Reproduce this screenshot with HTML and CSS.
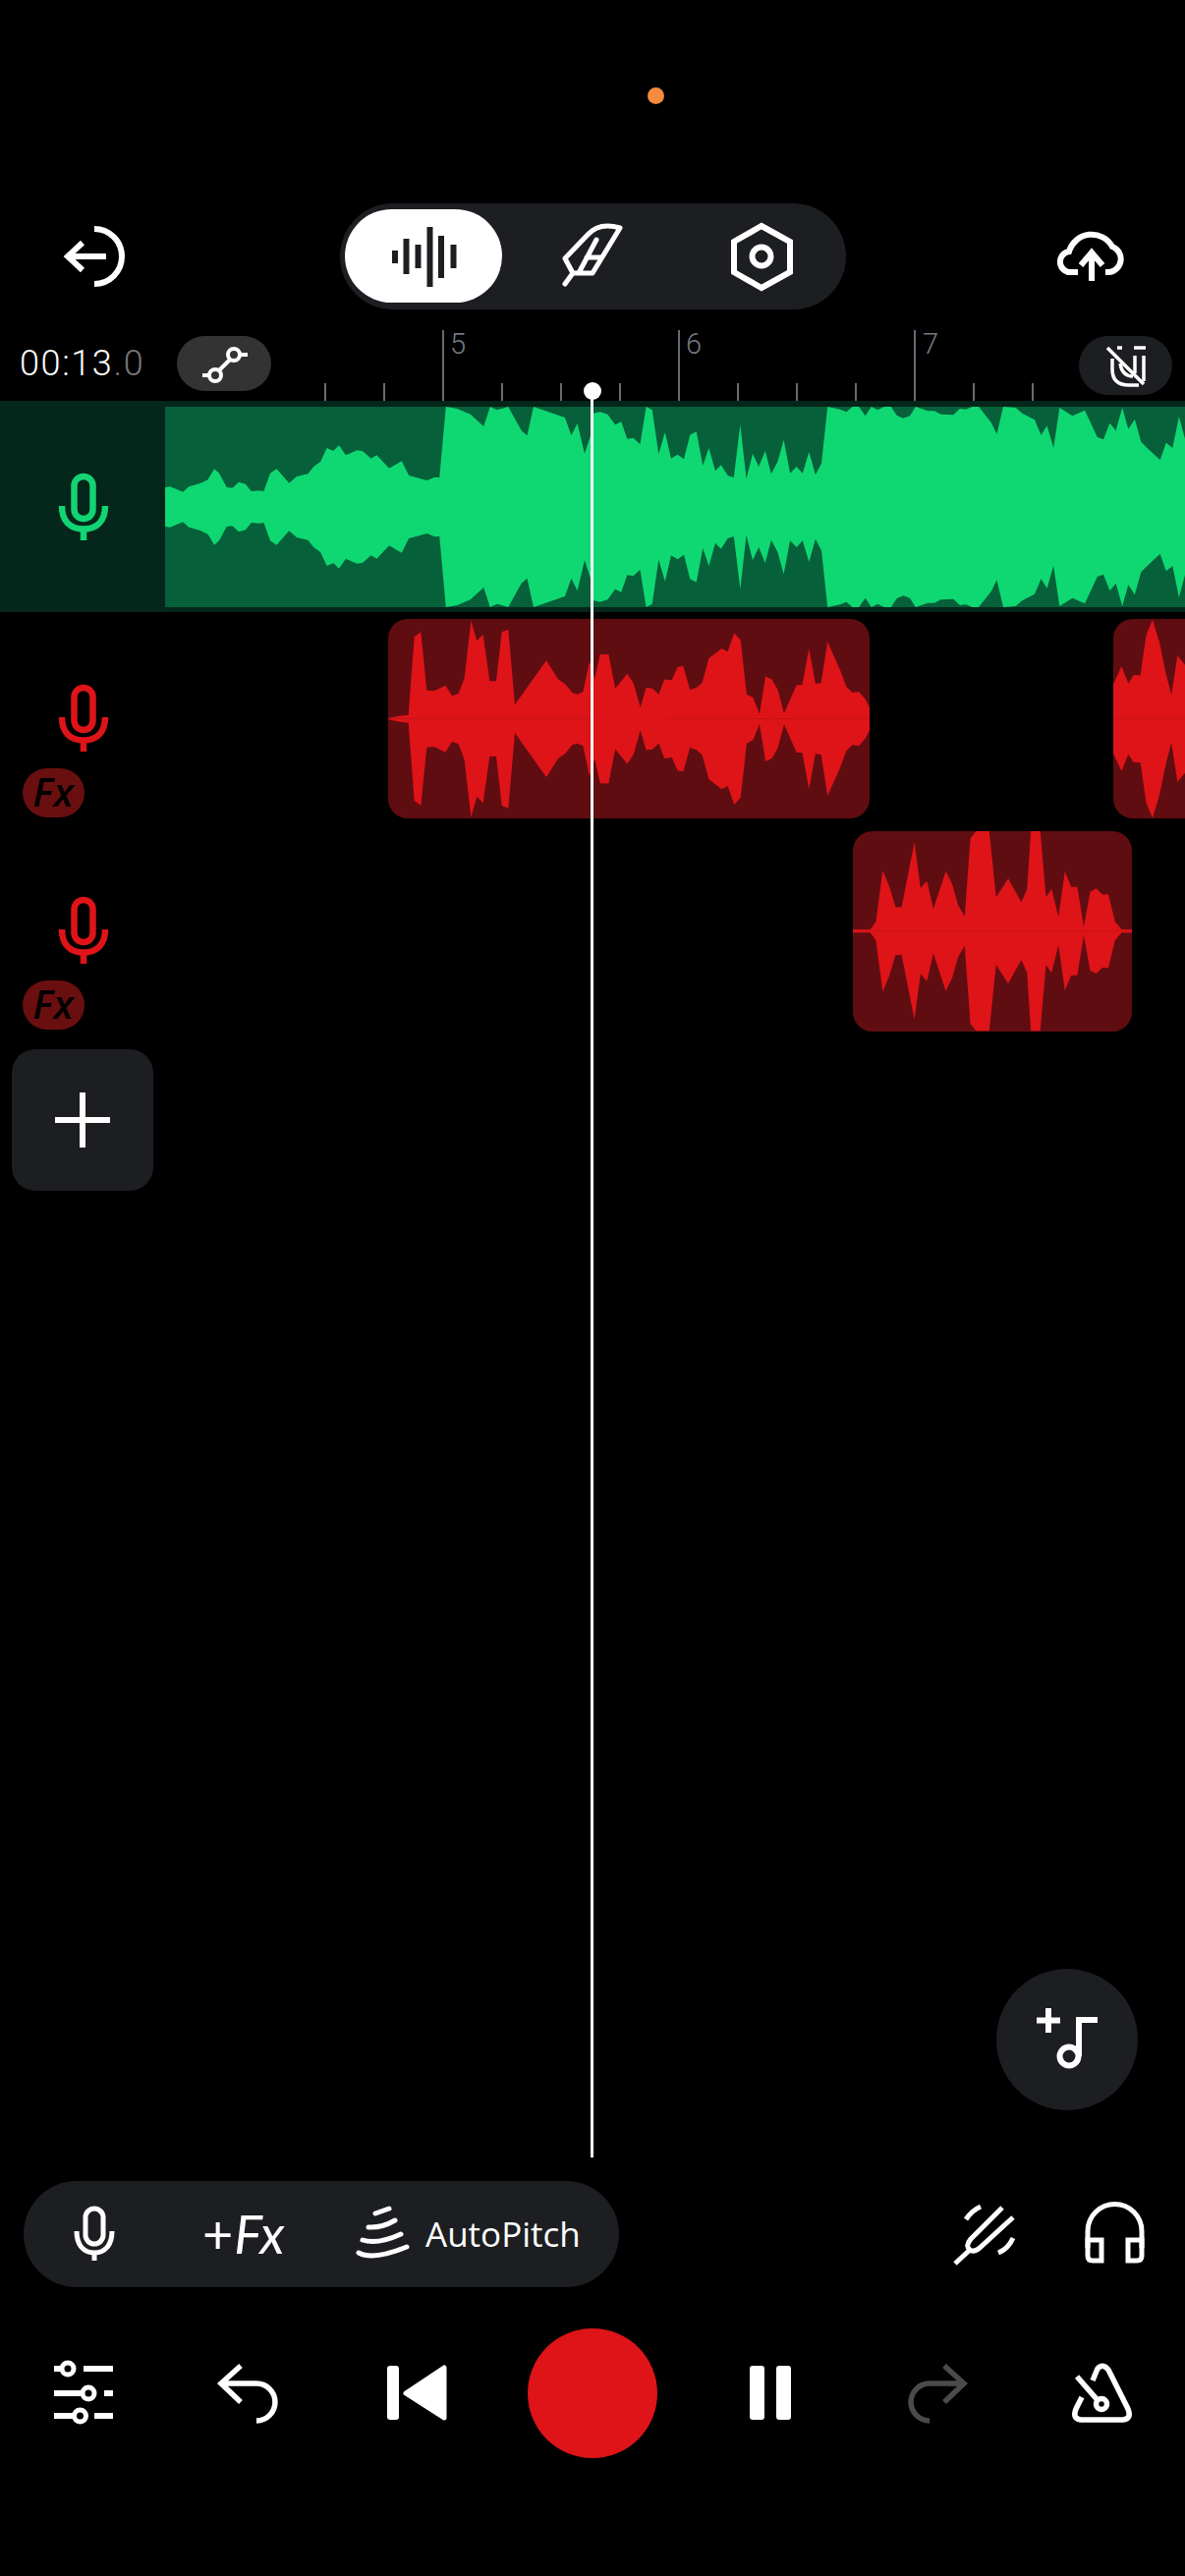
FILE: index.html
```html
<!DOCTYPE html>
<html lang="en">
<head>
<meta charset="utf-8">
<title>Studio</title>
<link rel="stylesheet" href="styles.css">
</head>
<body>
<div class="page">
  <div class="status"><span class="status-dot"></span></div>

  <div class="topbar">
    <svg class="ico80 stroke s6" viewBox="56 220 80 80"><path d="M96 232A28 28 0 0 1 96 288"/><path d="M108 260H70M84 246L69 260L84 274"/></svg>
    <div class="segments">
      <div class="seg seg-on">
        <svg class="ico80" viewBox="391 220 80 80"><g class="bars"><rect x="399" y="254" width="6" height="13"/><rect x="410.500" y="242" width="6" height="36"/><rect x="422.500" y="248" width="6" height="24"/><rect x="434.500" y="230" width="6" height="61"/><rect x="446" y="239" width="6" height="43"/><rect x="458.500" y="248" width="6" height="24"/></g></svg>
      </div>
      <div class="seg">
        <svg class="ico80 stroke s5 round" viewBox="563 220 80 80"><path d="M631 231C618 227 606 229 598 238L575 262L583 277H603Z"/><path d="M583 277L575 288M607 243L590 275M597 261H612"/></svg>
      </div>
      <div class="seg">
        <svg class="ico80 stroke s6" viewBox="735 220 80 80"><path d="M775 229L804 245V276L775 292L747 276V245Z"/><circle cx="775" cy="260" r="9.500"/></svg>
      </div>
    </div>
    <svg class="ico80 stroke s6" viewBox="1070 220 80 80"><path d="M1096 276H1090A10.500 10.500 0 0 1 1087 255A24 24 0 0 1 1131 250A13.500 13.500 0 0 1 1128 276H1124"/><path d="M1110 285V256M1099 269L1110 256L1121 269"/></svg>
  </div>

  <div class="ruler">
    <div class="time">00:13<span class="time-dim">.0</span></div>
    <div class="chip chip-curve">
      <svg class="ico56 stroke s4" viewBox="200 342 56 56"><circle cx="219" cy="382" r="6"/><circle cx="238" cy="361" r="6"/><path d="M223 377L234 366M206 382H213M244 361H252"/></svg>
    </div>
    <svg class="ruler-scale" viewBox="276 315 822 93">
      <g class="tick-major"><path d="M451 336V408M691 336V408M931 336V408"/></g>
      <g class="tick-minor"><path d="M331 390V408M391 390V408M511 390V408M571 390V408M631 390V408M751 390V408M811 390V408M871 390V408M991 390V408M1051 390V408"/></g>
      <text class="tick-label" x="458" y="360">5</text>
      <text class="tick-label" x="698" y="360">6</text>
      <text class="tick-label" x="939" y="360">7</text>
    </svg>
    <div class="chip chip-magnet">
      <svg class="ico60 stroke s3" viewBox="1115 342 60 60"><path d="M1126 354L1163 391"/><path d="M1131 365V376Q1131 392 1148 392H1158"/><path d="M1139 370Q1141 383 1152 383"/><path d="M1154 362V380M1163 362V388M1136 354H1141M1153 354H1165"/></svg>
    </div>
  </div>

  <section class="track-green">
    <div class="track-head">
      <svg class="mic mic-green" viewBox="0 0 80 80"><rect x="30.500" y="9" width="19" height="43" rx="9.500"/><path d="M18 39C18 55 27 62.500 40 62.500S62 55 62 39M40 64V74"/></svg>
    </div>
    <div class="lane-green">
      <svg class="lane-svg" viewBox="168 414 1038 204">
        <g class="wave-green" transform="translate(0 400) scale(.38457 .33333)">
          <path id="g1" d="M437 348V288L450 286L484 302L500 286L530 276L550 265L567 232L580 245L600 288L615 290L632 272L650 278L665 300L685 298L698 300L715 245L732 232L765 275L785 255L815 247L830 225L848 210L865 168L882 177L897 160L915 190L945 175L960 178L982 200L997 190L1030 230L1063 208L1082 252L1130 267L1150 257L1163 258L1180 42L1210 48L1245 65L1280 102L1297 42L1315 52L1345 42L1380 115L1395 130L1412 42L1495 75L1512 130L1528 92L1547 185L1563 130L1568 90V348Z"/>
          <use href="#g1" transform="matrix(1 0 0 -1 0 696)"/>
        </g>
        <g class="wave-green" transform="translate(603 400) scale(.38457 .33333)">
          <path id="g2" d="M0 348V70L3 62L20 58L40 65L60 97L76 88L92 140L108 137L126 157L142 42L158 52L175 187L192 120L208 200L225 188L242 202L258 128L275 118L292 222L308 168L325 238L340 220L358 252L374 258L391 97L407 262L424 185L440 225L457 177L473 247L490 210L506 143L523 245L540 225L556 245L573 180L590 250L606 215L622 42L655 50L672 58L688 42L705 42L722 70L738 42L755 52L772 42L790 42L805 68L822 77L840 70L855 42L888 55L905 55L922 65L955 67L972 48L988 50L1005 42L1022 42L1055 90L1070 125L1087 42L1120 45L1137 62L1170 82L1187 128L1203 100L1220 168L1236 45L1270 70L1303 53L1336 135L1352 142L1369 92L1385 115L1402 45L1418 110L1435 80L1452 150L1470 170L1502 205L1518 152L1535 168L1552 72L1568 140V348Z"/>
          <use href="#g2" transform="matrix(1 0 0 -1 0 696)"/>
        </g>
      </svg>
    </div>
  </section>

  <section class="track-red track-red-first">
    <div class="track-head-red">
      <svg class="mic mic-red" viewBox="0 0 80 80"><rect x="30.500" y="9" width="19" height="43" rx="9.500"/><path d="M18 39C18 55 27 62.500 40 62.500S62 55 62 39M40 64V74"/></svg>
      <div class="fx-badge">Fx</div>
    </div>
    <div class="lane-red">
      <div class="clip clip-a">
        <svg class="clip-svg" viewBox="395 630 490 203">
          <g class="wave-red" transform="translate(380 620) scale(.33333 .33333)">
            <path id="r1" d="M45 335V333L80 326L107 323L125 85L145 70L163 248L185 250L220 233L240 265L260 258L278 210L298 35L316 97L335 78L355 220L375 220L392 70L412 62L432 292L528 157L565 215L585 228L607 255L622 260L640 253L660 160L680 225L695 138L718 138L738 243L775 198L795 232L815 300L833 240L855 245L873 262L895 215L900 215V335Z"/>
            <use href="#r1" transform="matrix(1 0 0 -1 0 670)"/>
          </g>
          <g class="wave-red" transform="translate(603 610) scale(.38457 .33333)">
            <path id="r2" d="M0 365V262L3 258L20 168L42 168L60 275L92 228L108 255L127 335L142 270L158 272L175 292L190 245L210 247L225 207L240 204L258 277L275 270L290 255L308 180L342 150L358 160L375 103L392 125L408 290L425 300L442 350L458 235L475 245L490 275L507 348L540 262L555 262L573 150L590 258L605 256L622 130L655 215L672 268L688 285L705 283L722 305L735 335V365Z"/>
            <use href="#r2" transform="matrix(1 0 0 -1 0 730)"/>
          </g>
        </svg>
      </div>
      <div class="clip clip-c">
        <svg class="clip-svg" viewBox="1133 630 73 203">
          <g class="wave-red" transform="translate(603 610) scale(.38457 .33333)">
            <path id="r3" d="M1378 365V260L1400 205L1418 257L1432 232L1450 232L1465 110L1482 62L1500 130L1517 225L1532 292L1548 172L1568 200V365Z"/>
            <use href="#r3" transform="matrix(1 0 0 -1 0 730)"/>
          </g>
        </svg>
      </div>
    </div>
  </section>

  <section class="track-red">
    <div class="track-head-red">
      <svg class="mic mic-red" viewBox="0 0 80 80"><rect x="30.500" y="9" width="19" height="43" rx="9.500"/><path d="M18 39C18 55 27 62.500 40 62.500S62 55 62 39M40 64V74"/></svg>
      <div class="fx-badge">Fx</div>
    </div>
    <div class="lane-red">
      <div class="clip clip-b">
        <svg class="clip-svg" viewBox="868 846 284 204">
          <g class="wave-red" transform="translate(603 610) scale(.38457 .33333)">
            <path id="r4" d="M688 1013V1008L735 1008L750 985L768 828L785 875L802 940L818 940L852 742L868 882L885 860L902 945L935 830L952 870L968 935L985 968L1000 730L1015 708L1050 708L1068 910L1100 853L1135 925L1150 885L1160 708L1185 708L1200 910L1215 885L1233 970L1250 832L1267 878L1283 878L1300 1000L1317 893L1333 883L1350 902L1365 900L1383 985L1400 1008L1427 1008V1013Z"/>
            <use href="#r4" transform="matrix(1 0 0 -1 0 2026)"/>
          </g>
        </svg>
      </div>
    </div>
  </section>

  <button class="add-track"><svg class="ico80 stroke s6" viewBox="44 1099 80 80"><path d="M84 1111V1167M56 1139H112"/></svg></button>

  <div class="fab-row">
    <button class="fab"><svg class="ico80 stroke s6" viewBox="1046 2036 80 80"><path d="M1067 2044V2069M1055 2056.500H1079"/><circle cx="1088" cy="2093" r="9.500"/><path d="M1098 2093V2056H1117"/></svg></button>
  </div>

  <div class="tools">
    <div class="tool-pill">
      <svg class="ico80 stroke s5" viewBox="56 2234 80 80"><rect x="87" y="2248" width="18" height="36" rx="9"/><path d="M78 2271C78 2285 85 2293 96 2293S114 2285 114 2271M96 2293V2301"/></svg>
      <div class="plus-fx">+<span class="plus-fx-name">Fx</span></div>
      <svg class="ico-pitch" viewBox="360 2244 60 60"><path d="M382 2253L396 2248"/><path d="M375 2267Q388 2268 402 2260"/><path d="M369 2280Q384 2285 408 2274"/><path d="M365 2293Q380 2301 414 2287"/></svg>
      <div class="pitch-label">AutoPitch</div>
    </div>
    <svg class="ico80 stroke s5 fork" viewBox="961 2234 80 80"><path d="M1020 2247L988 2279Q982 2286 987 2290Q991 2293 997 2288L1031 2257M972 2304L986 2291"/><path d="M983 2259Q989 2250 998 2246M1016 2293Q1026 2289 1031 2278"/></svg>
    <svg class="ico80 stroke s5 phones" viewBox="1094 2234 80 80"><path d="M1107 2288V2271A27.500 27.500 0 0 1 1162 2271V2288"/><path d="M1107 2280H1121V2301H1112Q1107 2301 1107 2296Z"/><path d="M1162 2280H1148V2301H1157Q1162 2301 1162 2296Z"/></svg>
  </div>

  <div class="transport">
    <svg class="ico80 stroke s6" viewBox="45 2396 80 80"><path d="M55 2411H62M85 2411H115M55 2436H83M106 2436H115M55 2459H74M96 2459H115"/><g class="s5"><circle cx="69" cy="2411" r="6"/><circle cx="90" cy="2436" r="6"/><circle cx="81.500" cy="2459" r="6"/></g></svg>
    <svg class="ico80 stroke s55" viewBox="213 2396 80 80"><path d="M245 2408L225 2426L245 2445M225 2426H261A19 19 0 0 1 261 2464"/></svg>
    <svg class="ico80" viewBox="384 2396 80 80"><rect class="fill-white" x="394" y="2408" width="12" height="55" rx="3"/><path class="fill-white round-join" d="M452 2410V2461L413 2436Z"/></svg>
    <div class="record"></div>
    <svg class="ico80" viewBox="744 2396 80 80"><rect class="fill-white" x="763" y="2408" width="15" height="55" rx="3"/><rect class="fill-white" x="790" y="2408" width="15" height="55" rx="3"/></svg>
    <svg class="ico80 stroke stroke-dim s55" viewBox="915 2396 80 80"><path d="M961 2408L981 2426L961 2445M981 2426H946A19 19 0 0 0 946 2464"/></svg>
    <svg class="ico80 stroke s55" viewBox="1082 2396 80 80"><path d="M1102 2440L1096 2452Q1092 2462 1101 2463H1144Q1153 2462 1149 2452L1129 2412Q1123 2405 1118 2411L1113 2423"/><path d="M1097 2419L1118 2443"/><circle cx="1122" cy="2447" r="5.500"/></svg>
  </div>

  <div class="playhead"><span class="playhead-dot"></span></div>
</div>
</body>
</html>
```
FILE: styles.css
```css
* { box-sizing: border-box; }
html, body { margin: 0; padding: 0; background: #000; }
.page { position: relative; width: 1206px; height: 2622px; background: #000; overflow: hidden; display: flex; flex-direction: column; font-family: "Lato", "Liberation Sans", sans-serif; color: #fff; }

.status { height: 207px; padding: 89px 0 0 659px; }
.status-dot { display: block; width: 17px; height: 17px; border-radius: 50%; background: #f58b3f; }

svg { display: block; flex: none; }
.ico80 { width: 80px; height: 80px; }
.ico56 { width: 56px; height: 56px; }
.ico60 { width: 60px; height: 60px; }
.stroke { fill: none; stroke: #fff; stroke-linejoin: miter; }
.round { stroke-linejoin: round; stroke-linecap: round; }
.s3 { stroke-width: 3.5; }
.s4 { stroke-width: 4; }
.s5 { stroke-width: 5; }
.s55 { stroke-width: 5.5; }
.s6 { stroke-width: 6; }
.stroke-dim { stroke: #4b4b4b; }
.fill-white { fill: #fff; }
.round-join { stroke: #fff; stroke-width: 5; stroke-linejoin: round; }

.topbar { height: 108px; display: flex; align-items: center; padding-left: 56px; gap: 210px; }
.segments { width: 515px; height: 108px; border-radius: 54px; background: #1c1e21; padding: 6px 6px 7px 5px; display: flex; }
.seg { display: flex; align-items: center; justify-content: center; width: 160px; }
.seg:nth-child(2) { width: 184px; }
.seg-on { background: #fff; border-radius: 48px; }
.bars rect { fill: #1c1e21; }

.ruler { height: 93px; display: flex; align-items: flex-start; padding-left: 20px; }
.time { width: 160px; height: 56px; margin-top: 27px; font: 300 36px/56px "Roboto", sans-serif; letter-spacing: 1.6px; white-space: nowrap; }
.time-dim { color: #777; }
.chip { display: flex; align-items: center; justify-content: center; margin-top: 27px; width: 96px; height: 56px; border-radius: 28px; background: #333; flex: none; }
.chip-magnet { width: 95px; height: 60px; border-radius: 30px; background: #1c1e21; }
.ruler-scale { width: 822px; height: 93px; }
.tick-major path, .tick-minor path { stroke: #666c74; stroke-width: 2; fill: none; }
.tick-label { font: 300 29px "Roboto", sans-serif; fill: #737a84; }

.track-green { height: 215px; display: flex; background: #05261a; padding: 6px 0 5px; }
.track-head { width: 168px; display: flex; align-items: center; padding-left: 45px; }
.lane-green { flex: 1; background: #066039; }
.lane-svg { width: 1038px; height: 204px; }
.wave-green { fill: #0fd873; }
.wave-red { fill: #de1419; }

.mic { width: 80px; height: 80px; fill: none; stroke-width: 6.5; }
.mic-green { stroke: #12d473; }
.mic-red { stroke: #de1419; }

.track-red { height: 204px; display: flex; margin-top: 13px; }
.track-red-first { height: 203px; margin-top: 7px; }
.track-head-red { width: 168px; padding: 61px 0 0 45px; flex: none; }
.fx-badge { width: 63px; height: 50px; margin: 11px 0 0 -22px; border-radius: 25px; background: #6a0f10; color: #000; font: italic 600 40px/48px "Open Sans", sans-serif; letter-spacing: 1px; text-align: center; }
.lane-red { position: relative; flex: 1; }
.clip { position: absolute; top: 0; height: 100%; background: #600d11; overflow: hidden; }
.clip-a { left: 227px; width: 490px; border-radius: 20px; }
.clip-c { left: 965px; width: 73px; border-radius: 20px 0 0 20px; }
.clip-b { left: 700px; width: 284px; border-radius: 20px; }
.clip-svg { width: 100%; height: 100%; }

.add-track { width: 144px; height: 144px; margin: 18px 0 0 12px; padding: 0; border: 0; border-radius: 24px; background: #1c1e21; display: flex; align-items: center; justify-content: center; }

.fab-row { display: flex; justify-content: flex-end; padding-right: 48px; margin-top: 792px; }
.fab { width: 144px; height: 144px; padding: 0; border: 0; border-radius: 50%; background: #1c1e21; display: flex; align-items: center; justify-content: center; }

.tools { display: flex; align-items: center; height: 108px; margin-top: 72px; padding-left: 24px; }
.tool-pill { width: 606px; height: 108px; border-radius: 54px; background: #1c1e21; padding-left: 32px; display: flex; align-items: center; flex: none; }
.plus-fx { width: 84px; margin-left: 70px; font: 400 54px/60px "Lato", sans-serif; white-space: nowrap; }
.plus-fx-name { font-style: italic; margin-left: 1px; }
.ico-pitch { width: 60px; height: 60px; margin-left: 70px; fill: none; stroke: #fff; stroke-width: 5; stroke-linecap: round; }
.pitch-label { margin-left: 13px; font: 500 35px/44px "Open Sans", sans-serif; white-space: nowrap; }
.fork { margin-left: 331px; }
.phones { margin-left: 53px; }

.transport { display: grid; grid-template-columns: 170px 166px 176px 182px 180px 162px 170px; justify-items: center; align-items: center; height: 132px; margin-top: 42px; }
.record { width: 132px; height: 132px; border-radius: 50%; background: #de1419; }

.playhead { position: absolute; left: 601px; top: 398px; width: 3px; height: 1798px; background: #fff; }
.playhead-dot { position: absolute; left: -7.500px; top: -9px; width: 18px; height: 18px; border-radius: 50%; background: #fff; }
```
